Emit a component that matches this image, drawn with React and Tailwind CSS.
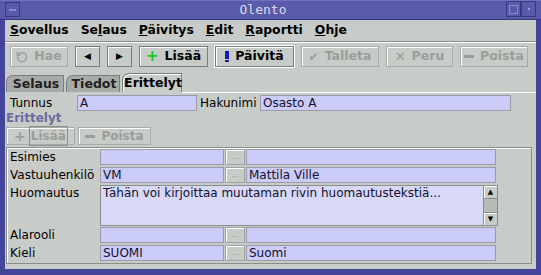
import React from "react";
import { RotateCw } from "lucide-react";

const F = { fontFamily: '"DejaVu Sans", "Liberation Sans", sans-serif' };

function Btn({ children, disabled, w, active }) {
  return (
    <div
      className={`h-[21px] ${w} flex items-center justify-center gap-[6px] border ${disabled ? "border-[#a8aca8] text-[#9a9e9a]" : "border-[#7a7e7a] text-black"} shadow-[inset_1px_1px_0_#ffffff] text-[12.5px] font-bold ${active ? "outline outline-1 outline-white" : ""}`}
    >
      {children}
    </div>
  );
}

function Field({ w, children, light }) {
  return (
    <div className={`${w} h-[16px] ${light ? "bg-[#d8d8f8]" : "bg-[#ccccf8]"} border border-[#9a9aa8] flex items-center px-[2px] text-[12px] leading-none text-[#101030]`}>
      {children}
    </div>
  );
}

function Dots() {
  return (
    <div className="w-[20px] h-[16px] border border-[#a0a4a0] bg-[#c8ccc8] shadow-[inset_1px_1px_0_#ffffff] flex items-end justify-center pb-[3px] text-[7px] leading-none text-[#8a8e8a]">
      ...
    </div>
  );
}

function Row({ label, a, b }) {
  return (
    <div className="flex h-[18px] items-start">
      <div className="w-[92px] h-[16px] pl-[3px] text-[12px] leading-[16px] text-black whitespace-nowrap">{label}</div>
      <div className="ml-[1px] flex gap-[1px]">
        <Field w="w-[124px]">{a}</Field>
        <Dots />
        <Field w="w-[250px]">{b}</Field>
      </div>
    </div>
  );
}

export default function App() {
  return (
    <div style={F} className="w-[541px] h-[275px] bg-[#44449a] flex flex-col overflow-hidden">
      {/* title bar */}
      <div className="h-[20px] flex items-stretch bg-[#5a5aaa] border-t border-[#7070c0] border-b border-b-[#34347a]">
        <div className="w-[5px]" />
        <div className="w-[15px] h-[15px] mt-[1px] border border-[#3a3a80] flex items-center justify-center">
          <div className="w-[7px] h-[2px] bg-[#8a8ad0]" />
        </div>
        <div className="flex-1 flex items-center justify-center text-[13px] text-[#dcdce8]" style={{ fontFamily: '"DejaVu Sans Mono", monospace' }}>
          Olento
        </div>
        <div className="w-[15px] h-[16px] border border-[#3a3a80] flex items-center justify-center">
          <div className="w-[9px] h-[9px] border border-[#8a8ad0]" />
        </div>
        <div className="w-[15px] h-[16px] border border-[#3a3a80] flex items-center justify-center">
          <div className="w-[2px] h-[2px] bg-[#9a9ae0]" />
        </div>
        <div className="w-[5px]" />
      </div>

      {/* body */}
      <div className="flex-1 mx-[5px] mb-[6px] bg-[#c8ccc8] flex flex-col">
        {/* menu */}
        <div className="h-[20px] flex items-center pl-[5px] gap-[12px] text-[12.4px] font-bold text-black">
          <span><u>S</u>ovellus</span>
          <span>Se<u>l</u>aus</span>
          <span><u>P</u>äivitys</span>
          <span><u>E</u>dit</span>
          <span><u>R</u>aportti</span>
          <span><u>O</u>hje</span>
        </div>
        <div className="mt-[1px] h-[1px] bg-[#8a8e8a]" />
        <div className="h-[1px] bg-white" />

        {/* toolbar */}
        <div className="mt-[3px] h-[21px] flex pl-[5px] gap-[7px]">
          <Btn w="w-[58px]" disabled>
            <RotateCw size={12} strokeWidth={3.5} className="text-[#a0a4a0] -scale-x-100" />Hae
          </Btn>
          <Btn w="w-[25px]"><span className="text-[9px]">◀</span></Btn>
          <Btn w="w-[25px]"><span className="text-[9px]">▶</span></Btn>
          <Btn w="w-[69px]">
            <span className="text-[15px] leading-none text-[#18c818] font-black">+</span>Lisää
          </Btn>
          <Btn w="w-[79px]" active>
            <span className="w-[4px] h-[11px] flex flex-col gap-[1px]"><span className="h-[8px] bg-[#1a1aa8]" /><span className="h-[2px] bg-[#1a1aa8]" /></span>Päivitä
          </Btn>
          <Btn w="w-[78px]" disabled>
            <span className="text-[12px]">✔</span>Talleta
          </Btn>
          <Btn w="w-[67px]" disabled>
            <span className="text-[13px]">✕</span>Peru
          </Btn>
          <Btn w="w-[68px]" disabled>
            <span className="w-[10px] h-[3px] bg-[#9a9e9a]" />Poista
          </Btn>
        </div>

        {/* tabs */}
        <div className="mt-[6px] flex items-end pl-[1px] h-[19px] gap-[2px]">
          <div className="h-[17px] w-[58px] bg-[#a8aca8] border border-b-0 border-[#7a7e7a] rounded-tl-[7px] text-[12.5px] font-bold flex items-center justify-center pl-[2px] text-[#202020]">Selaus</div>
          <div className="h-[17px] w-[54px] bg-[#a8aca8] border border-b-0 border-[#7a7e7a] rounded-tl-[7px] text-[12.5px] font-bold flex items-center justify-center pl-[2px] text-[#202020]">Tiedot</div>
          <div className="h-[19px] w-[60px] bg-[#c8ccc8] border border-b-0 border-[#7a7e7a] shadow-[inset_1px_1px_0_#ffffff] rounded-tl-[7px] text-[12.5px] font-bold flex items-center justify-center pl-[2px] text-black">Erittelyt</div>
        </div>
        <div className="h-[1px] bg-white ml-[177px]" />

        {/* content */}
        <div className="flex flex-col pl-[1px] pr-[5px]">
          <div className="mt-[2px] h-[16px] flex items-center">
            <div className="w-[71px] pl-[4px] text-[12px]">Tunnus</div>
            <Field w="w-[120px]">A</Field>
            <div className="w-[63px] pl-[3px] text-[12px]">Hakunimi</div>
            <Field w="w-[251px]">Osasto A</Field>
          </div>
          <div className="mt-[1px] h-[13px] text-[12px] leading-[12px] font-bold text-[#6a6aa0]">Erittelyt</div>
          <div className="mt-[2px] flex gap-[3px] h-[18px]">
            <div className="w-[69px] h-[18px] border border-[#a8aca8] shadow-[inset_1px_1px_0_#ffffff] flex items-center justify-center gap-[4px] text-[12px] font-bold text-[#9a9e9a]">
              <span className="text-[14px] leading-none font-black">+</span><span className="outline outline-1 outline-[#8a8e8a] px-[1px]">Lisää</span>
            </div>
            <div className="w-[73px] h-[18px] border border-[#a8aca8] shadow-[inset_1px_1px_0_#ffffff] flex items-center justify-center gap-[6px] text-[12px] font-bold text-[#9a9e9a]">
              <span className="w-[10px] h-[3px] bg-[#9a9e9a]" />Poista
            </div>
          </div>

          {/* table */}
          <div className="mt-[2px] w-[526px] h-[117px] border border-[#8a8e8a] shadow-[inset_1px_1px_0_#ffffff] pt-[1px] flex flex-col">
            <Row label="Esimies" a="" b="" />
            <Row label="Vastuuhenkilö" a="VM" b="Mattila Ville" />
            <div className="flex h-[42px] items-start">
              <div className="w-[92px] h-[16px] pl-[3px] text-[12px] leading-[16px]">Huomautus</div>
              <div className="ml-[1px] w-[398px] h-[41px] bg-[#d8d8f8] border border-[#8a8e8a] flex">
                <div className="flex-1 px-[2px] text-[12px] leading-[14px] text-[#101030]">Tähän voi kirjoittaa muutaman rivin huomautustekstiä...</div>
                <div className="w-[14px] flex flex-col bg-[#c8ccc8] border-l border-[#8a8e8a]">
                  <div className="h-[13px] border-b border-[#8a8e8a] shadow-[inset_1px_1px_0_#ffffff] flex items-center justify-center text-[7px] leading-none">▲</div>
                  <div className="flex-1 bg-[#b8bcb8]" />
                  <div className="h-[13px] border-t border-[#8a8e8a] shadow-[inset_1px_1px_0_#ffffff] flex items-center justify-center text-[7px] leading-none">▼</div>
                </div>
              </div>
            </div>
            <Row label="Alarooli" a="" b="" />
            <Row label="Kieli" a="SUOMI" b="Suomi" />
          </div>
        </div>
      </div>
    </div>
  );
}
